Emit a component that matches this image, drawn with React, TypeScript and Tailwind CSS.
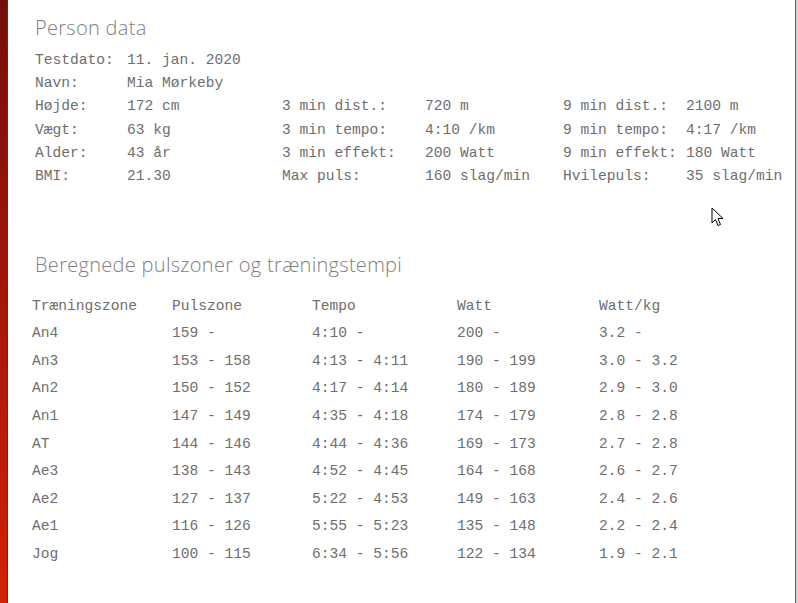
import React from 'react';

const mono = "font-['Liberation_Mono','Courier_New',monospace]";

const personRows: string[][] = [
  ['Testdato:', '11. jan. 2020', '', '', '', ''],
  ['Navn:', 'Mia Mørkeby', '', '', '', ''],
  ['Højde:', '172 cm', '3 min dist.:', '720 m', '9 min dist.:', '2100 m'],
  ['Vægt:', '63 kg', '3 min tempo:', '4:10 /km', '9 min tempo:', '4:17 /km'],
  ['Alder:', '43 år', '3 min effekt:', '200 Watt', '9 min effekt:', '180 Watt'],
  ['BMI:', '21.30', 'Max puls:', '160 slag/min', 'Hvilepuls:', '35 slag/min'],
];

const zones: string[][] = [
  ['Træningszone', 'Pulszone', 'Tempo', 'Watt', 'Watt/kg'],
  ['An4', '159 -', '4:10 -', '200 -', '3.2 -'],
  ['An3', '153 - 158', '4:13 - 4:11', '190 - 199', '3.0 - 3.2'],
  ['An2', '150 - 152', '4:17 - 4:14', '180 - 189', '2.9 - 3.0'],
  ['An1', '147 - 149', '4:35 - 4:18', '174 - 179', '2.8 - 2.8'],
  ['AT', '144 - 146', '4:44 - 4:36', '169 - 173', '2.7 - 2.8'],
  ['Ae3', '138 - 143', '4:52 - 4:45', '164 - 168', '2.6 - 2.7'],
  ['Ae2', '127 - 137', '5:22 - 4:53', '149 - 163', '2.4 - 2.6'],
  ['Ae1', '116 - 126', '5:55 - 5:23', '135 - 148', '2.2 - 2.4'],
  ['Jog', '100 - 115', '6:34 - 5:56', '122 - 134', '1.9 - 2.1'],
];

function Cursor() {
  return (
    <svg className="absolute left-[711px] top-[207px]" width="14" height="22" viewBox="0 0 14 22">
      <path
        d="M1 1 L1 16 L4.5 12.5 L7 18.5 L9.5 17.5 L7 11.5 L12 11.5 Z"
        fill="#fff"
        stroke="#000"
        strokeWidth="1"
      />
    </svg>
  );
}

export default function App() {
  return (
    <div className="relative flex h-[603px] w-[798px] overflow-hidden bg-white">
      {/* Left accent strip */}
      <div className="h-full w-[8px] shrink-0 border-r border-[#4b3434] bg-gradient-to-b from-[#760e08] to-[#d42108]" />

      {/* Main content */}
      <div className="flex-1 pl-[27px] pt-[14px]">
        <h2 className="font-['Open_Sans',sans-serif] text-[20px] font-light leading-[28px] tracking-[0.3px] text-[#808080]">
          Person data
        </h2>

        <div className={`${mono} mt-[7px] text-[14.6px] text-[#6e6e6e]`}>
          {personRows.map((row, i) => (
            <div key={i} className="grid h-[23.3px] grid-cols-[92px_155px_143px_138px_123px_1fr] items-center">
              {row.map((cell, j) => (
                <span key={j} className="whitespace-pre">{cell}</span>
              ))}
            </div>
          ))}
        </div>

        <h2 className="mt-[62px] font-['Open_Sans',sans-serif] text-[20px] font-light leading-[28px] tracking-[0.3px] text-[#808080]">
          Beregnede pulszoner og træningstempi
        </h2>

        <div className={`${mono} -ml-[3px] mt-[14px] text-[14.6px] text-[#6e6e6e]`}>
          {zones.map((row, i) => (
            <div key={i} className="grid h-[27.6px] grid-cols-[140px_140px_145px_142px_1fr] items-center">
              {row.map((cell, j) => (
                <span key={j} className="whitespace-pre">{cell}</span>
              ))}
            </div>
          ))}
        </div>
      </div>

      {/* Right window edge */}
      <div className="h-full w-[3px] shrink-0 border-l border-[#5a5a5a] bg-[#d8d4d4]" />

      <Cursor />
    </div>
  );
}
